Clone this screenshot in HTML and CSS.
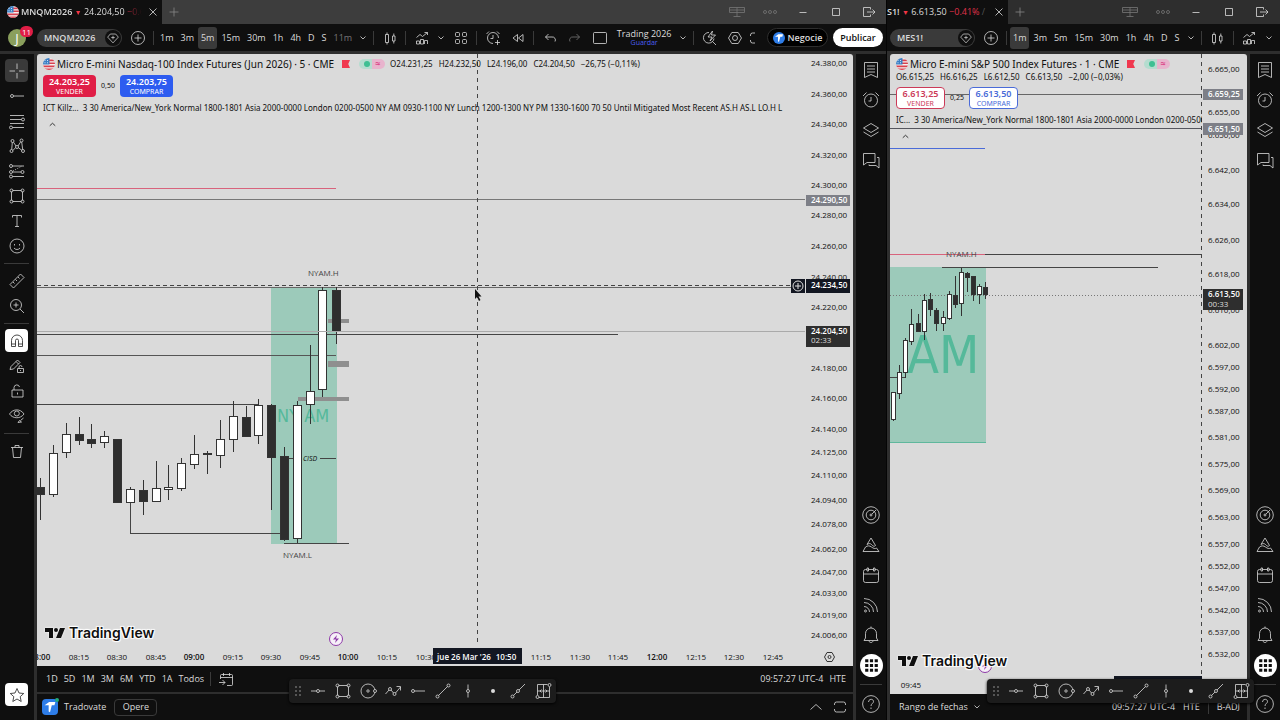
FILE: index.html
```html
<!DOCTYPE html>
<html lang="es">

<head>
    <meta charset="utf-8">
    <meta name="viewport" content="width=device-width, initial-scale=1.0">
    <title>MNQM2026 24.204,50</title>
    <link rel="stylesheet" href="styles.css">
</head>

<body>

    <!-- icons -->
    <svg class="sprite" aria-hidden="true">
        <symbol id="i-flag" viewBox="0 0 12 12">
            <clipPath id="round"><circle cx="6" cy="6" r="6"/></clipPath>
            <g clip-path="url(#round)" stroke="none">
                <path fill="#f4f0f0" d="M0 0h12v12H0z"/>
                <path fill="#d8414f" d="M6 1.5h6v1.7H6zM6 4.5h6v1.6H6zM0 7.6h12v1.6H0zM0 10.6h12V12H0z"/>
                <path fill="#3a7fc4" d="M0 0h6.5v6.5H0z"/>
                <path fill="#cfe2f5" d="M1.5 2h1v1h-1zM4 2h1v1H4zM1.5 4.3h1v1h-1zM4 4.3h1v1H4z"/>
            </g>
        </symbol>
        <symbol id="i-close" viewBox="0 0 18 18"><path d="M5.5 5.5l7 7M12.5 5.5l-7 7"/></symbol>
        <symbol id="i-plus" viewBox="0 0 18 18"><path d="M9 4.5v9M4.5 9h9"/></symbol>
        <symbol id="i-windows" viewBox="0 0 18 18"><path d="M1.5 4.5h15v5h-15zM9 4.5v9M5.5 13.5h7M1.5 7h15"/></symbol>
        <symbol id="i-more" viewBox="0 0 18 18"><circle cx="4" cy="9" r="1.5"/><circle cx="9" cy="9" r="1.5"/><circle cx="14" cy="9" r="1.5"/></symbol>
        <symbol id="i-min" viewBox="0 0 18 18"><path d="M5.5 9.5h7"/></symbol>
        <symbol id="i-max" viewBox="0 0 18 18"><path d="M5.5 5.5h7v7h-7z"/></symbol>
        <symbol id="i-exit" viewBox="0 0 18 18"><path d="M10.5 6.5v-2h-7v9h7v-2M7 9h8M12.5 6.5L15 9l-2.5 2.5"/></symbol>
        <symbol id="i-heart" viewBox="0 0 18 18"><path d="M6 4.5h6l3 3.5L9 14.5 3 8zM9 6.5v4M7 8.5h4"/></symbol>
        <symbol id="i-pluscircle" viewBox="0 0 18 18"><circle cx="9" cy="9" r="6.5"/><path d="M9 5.5v7M5.5 9h7"/></symbol>
        <symbol id="i-down" viewBox="0 0 18 18"><path d="M6.5 7.5L9 10l2.5-2.5"/></symbol>
        <symbol id="i-up" viewBox="0 0 18 18"><path d="M3.5 11.5L9 6.5l5.5 5"/></symbol>
        <symbol id="i-candles" viewBox="0 0 18 18"><path d="M4.5 5.5h3v8h-3zM6 3.5v2M6 13.5v2M11.5 7H14v5h-2.5zM12.8 4.5V7M12.8 12v2.5"/></symbol>
        <symbol id="i-indicators" viewBox="0 0 18 18"><path d="M3.5 15v-3h3v3zM7.5 15v-4.5h3V15zM11.5 15v-3.5h3V15M3.5 8.500L7 5.500l2.500 2 5-4M11.5 3.500h3V6"/></symbol>
        <symbol id="i-grid" viewBox="0 0 18 18"><rect x="3.5" y="3.5" width="4" height="4" rx="1"/><rect x="10.5" y="3.5" width="4" height="4" rx="1"/><rect x="3.5" y="10.5" width="4" height="4" rx="1"/><rect x="10.5" y="10.5" width="4" height="4" rx="1"/></symbol>
        <symbol id="i-alertplus" viewBox="0 0 18 18"><path d="M14.5 9A5.500 5.500 0 1 0 9 14.500M9 6v3.500H6.500M2.500 5L5 2.500M13 2.500L15.500 5M13.500 11v5M11 13.500h5"/></symbol>
        <symbol id="i-rewind" viewBox="0 0 18 18"><path d="M8.500 5.500v7L4 9zM14 5.500v7L9.500 9z"/></symbol>
        <symbol id="i-undo" viewBox="0 0 18 18"><path d="M7.500 5L4.500 8l3 3M4.500 8H11a3 3 0 0 1 3 4.500"/></symbol>
        <symbol id="i-redo" viewBox="0 0 18 18"><path d="M10.500 5l3 3-3 3M13.500 8H7a3 3 0 0 0-3 4.500"/></symbol>
        <symbol id="i-layout" viewBox="0 0 18 18"><rect x="2.500" y="3.500" width="13" height="11" rx="1"/></symbol>
        <symbol id="i-quick" viewBox="0 0 18 18"><path d="M8 3.500A5.300 5.300 0 1 0 13 9.500M11.500 12.500L15 16M11.500 2L7 8h4l-2 4 5.500-6h-4z"/></symbol>
        <symbol id="i-hex" viewBox="0 0 18 18"><path d="M5.800 3.500h6.400L15.500 9l-3.300 5.500H5.800L2.500 9z"/><circle cx="9" cy="9" r="2.500"/></symbol>
        <symbol id="i-full" viewBox="0 0 18 18"><path d="M3.500 7V6a2 2 0 0 1 2-2h7a2 2 0 0 1 2 2v1M14.500 11v1a2 2 0 0 1-2 2h-7a2 2 0 0 1-2-2v-1"/></symbol>
        <symbol id="i-corners" viewBox="0 0 18 18"><path d="M3.500 7V6a2 2 0 0 1 2-2H8M3.500 11v1a2 2 0 0 0 2 2H8"/></symbol>
        <symbol id="i-cross" viewBox="0 0 18 18"><path d="M9 1.500V7M9 11v5.500M1.500 9H7M11 9h5.500"/></symbol>
        <symbol id="i-hray" viewBox="0 0 18 18"><circle cx="4" cy="9" r="1.500"/><path d="M5.500 9H16"/></symbol>
        <symbol id="i-fib" viewBox="0 0 18 18"><path d="M2 3.500h14M2 7.500h11.500M2 11.500h14M4.500 15.500H16"/><circle cx="15" cy="7.500" r="1.500"/><circle cx="3" cy="15.500" r="1.500"/></symbol>
        <symbol id="i-pattern" viewBox="0 0 18 18"><circle cx="3.500" cy="14" r="1.500"/><circle cx="4.500" cy="4" r="1.500"/><circle cx="9" cy="10" r="1.500"/><circle cx="13.500" cy="3.500" r="1.500"/><circle cx="15" cy="14" r="1.500"/><path d="M3.700 12.500l.6-7M5.500 5.200L8 9M10 9l2.700-4.200M13.700 5l1 7.500M5 13.400l2.600-2.800M10.300 10.700l3.500 2.500"/></symbol>
        <symbol id="i-forecast" viewBox="0 0 18 18"><circle cx="3" cy="4" r="1.500"/><circle cx="3" cy="10" r="1.500"/><circle cx="3" cy="14.500" r="1.500"/><circle cx="14.500" cy="10" r="1.500"/><path d="M4.500 4H16M4.500 10H13M4.500 14.500H16"/><path stroke-dasharray="1 1.500" d="M5 9l9-5"/></symbol>
        <symbol id="i-rect" viewBox="0 0 18 18"><path d="M4.500 3.500h9M4.500 14.500h9M3.500 4.500v9M14.500 4.500v9"/><circle cx="3.500" cy="3.500" r="1.500"/><circle cx="14.500" cy="3.500" r="1.500"/><circle cx="3.500" cy="14.500" r="1.500"/><circle cx="14.500" cy="14.500" r="1.500"/></symbol>
        <symbol id="i-text" viewBox="0 0 18 18"><path d="M4.500 5.500v-2h9v2M9 3.500v11M7 14.500h4"/></symbol>
        <symbol id="i-smile" viewBox="0 0 18 18"><circle cx="9" cy="9" r="7"/><path d="M6.500 7v1.500M11.500 7v1.500M6 11c1.500 2 4.500 2 6 0"/></symbol>
        <symbol id="i-ruler" viewBox="0 0 18 18"><path d="M2 12.500L12.500 2 16 5.500 5.500 16zM5 10l1.500 1.500M7.500 7.500L9 9M10 5l1.500 1.500"/></symbol>
        <symbol id="i-zoomin" viewBox="0 0 18 18"><circle cx="8" cy="8" r="5.500"/><path d="M12 12l4 4M8 5.500v5M5.500 8h5"/></symbol>
        <symbol id="i-magnet" viewBox="0 0 18 18"><path d="M3.500 14.500v-6a5.500 5.500 0 0 1 11 0v6h-4v-6a1.500 1.500 0 0 0-3 0v6zM3.500 12h4M10.500 12h4"/></symbol>
        <symbol id="i-penlock" viewBox="0 0 18 18"><path d="M2 12.500l1-3L9.500 3 12 5.500 5.500 12zM8 4.500L10.500 7M9.500 11.500h6v4h-6zM11 11.500V10a1.500 1.500 0 0 1 3 0M12.500 13v1"/></symbol>
        <symbol id="i-lock" viewBox="0 0 18 18"><path d="M4 8h11v7H4zM6 8V5.500a2.800 2.800 0 0 1 5.500-.5M9.500 10.500v2"/></symbol>
        <symbol id="i-eye" viewBox="0 0 18 18"><path d="M1.500 7C5 1.500 12.500 1.500 16 7c-3.500 5-11 5-14.500 0z"/><circle cx="8.800" cy="6.500" r="2.500"/><path d="M10 15.500l1.500-2 2 1.500zM12.500 13.500l3-2.500"/></symbol>
        <symbol id="i-trash" viewBox="0 0 18 18"><path d="M3 5.500h12M4.500 5.500l1 10h7l1-10M7 5.500v-2h4v2"/></symbol>
        <symbol id="i-star" viewBox="0 0 18 18"><path d="M9 2.500L11 7l4.700.5-3.500 3.200 1 4.800L9 13l-4.200 2.500 1-4.800L2.300 7.500 7 7z"/></symbol>
        <symbol id="i-list" viewBox="0 0 18 18"><path d="M2.500 1.500h13v15L9 13.500l-6.500 3zM5 5h8M5 8h8M5 11h8"/></symbol>
        <symbol id="i-alarm" viewBox="0 0 18 18"><circle cx="9" cy="9.500" r="6.500"/><path d="M9 6v4H6.500M1 5l3.500-3.500M13.500 1.500L17 5"/></symbol>
        <symbol id="i-layers" viewBox="0 0 18 18"><path d="M9 2.500L16.500 7 9 11.500 1.500 7zM1.500 11L9 15.500l7.500-4.500"/></symbol>
        <symbol id="i-chat" viewBox="0 0 18 18"><path d="M1.500 2.500H13v9H5L1.500 14zM15 6.500h2V17l-3-2.500H7v-1"/></symbol>
        <symbol id="i-radar" viewBox="0 0 18 18"><circle cx="9" cy="9" r="8.300"/><circle cx="9" cy="9" r="4.800"/><circle cx="9" cy="9" r="1"/><path d="M10 8l4-4"/></symbol>
        <symbol id="i-pyramid" viewBox="0 0 18 18"><path d="M5 8.500L9 2l4.500 7.500c-1.500 1.500-2.500.5-4-1s-3-1-4.500 0zM3.500 11L1 15.500h16L14.500 12c-1.500 1-3 .5-5-1s-4-1.500-6 0z"/></symbol>
        <symbol id="i-calendar" viewBox="0 0 18 18"><rect x="1.500" y="3.500" width="15" height="13" rx="2"/><path d="M1.500 8h15"/><path fill="#0f0f0f" d="M5 2h1.500v3H5zM11.500 2H13v3h-1.500z"/></symbol>
        <symbol id="i-feed" viewBox="0 0 18 18"><circle cx="3.500" cy="15" r="1"/><path d="M2 10.500A5.500 5.500 0 0 1 7.500 16M2 6.500A9.500 9.500 0 0 1 11.500 16M2 2.500A13.500 13.500 0 0 1 15.500 16"/></symbol>
        <symbol id="i-bell" viewBox="0 0 18 18"><path d="M2 14.500h14L14.500 12V7.500C14.500 4.500 12 2 9 2S3.500 4.500 3.500 7.500V12zM7 15c.5 2 3.500 2 4 0M9 .5V2"/></symbol>
        <symbol id="i-apps" viewBox="0 0 18 18"><path fill="currentColor" stroke="none" d="M3 3h3v3H3zM7.500 3h3v3h-3zM12 3h3v3h-3zM3 7.500h3v3H3zM7.500 7.500h3v3h-3zM12 7.500h3v3h-3zM3 12h3v3H3zM7.500 12h3v3h-3zM12 12h3v3h-3z"/></symbol>
        <symbol id="i-help" viewBox="0 0 18 18"><circle cx="9" cy="9" r="8.400"/><path d="M6.500 7c0-3.500 5-3.500 5-.5C11.500 8.500 9 8.500 9 11M9 12.500V14"/></symbol>
        <symbol id="i-goto" viewBox="0 0 18 18"><path d="M3.500 9V5.500a1 1 0 0 1 1-1h10a1 1 0 0 1 1 1v9a1 1 0 0 1-1 1H10M3.500 7.500h12M6.500 3v3M12.500 3v3M2 12.500h6M5.500 10L8 12.500 5.500 15"/></symbol>
        <symbol id="i-hline" viewBox="0 0 18 18"><path d="M2 9h5.500M10.500 9H16"/><circle cx="9" cy="9" r="1.500"/></symbol>
        <symbol id="i-circle" viewBox="0 0 18 18"><circle cx="9" cy="9" r="7"/><circle cx="9" cy="9" r="1.200"/><circle cx="16" cy="9" r="1.500" fill="#1c1c1c"/></symbol>
        <symbol id="i-path" viewBox="0 0 18 18"><path d="M1.500 12L5 8M7 8l2.500 3M11.500 11l5-6M12.500 4.500h4v4"/><circle cx="6" cy="7" r="1.500"/><circle cx="10.500" cy="12" r="1.500"/></symbol>
        <symbol id="i-trend" viewBox="0 0 18 18"><circle cx="3.500" cy="14.500" r="1.500"/><circle cx="14.500" cy="3.500" r="1.500"/><path d="M4.500 13.500l9-9"/></symbol>
        <symbol id="i-vline" viewBox="0 0 18 18"><path d="M9 2.500v5M9 10.500v5"/><circle cx="9" cy="9" r="1.500"/></symbol>
        <symbol id="i-dot" viewBox="0 0 18 18"><circle cx="9" cy="9" r="2" fill="currentColor" stroke="none"/></symbol>
        <symbol id="i-ray" viewBox="0 0 18 18"><circle cx="3.500" cy="14.500" r="1.500"/><circle cx="9" cy="9" r="1.500"/><path d="M4.500 13.500L8 10M10 8l6-6"/></symbol>
        <symbol id="i-range" viewBox="0 0 18 18"><path d="M3.500 13V2.500h10M5 15.500h10.500V5M9.500 2.500v13M3.500 9h12M7.500 7.500L6 9l1.500 1.500M11.500 7.500L13 9l-1.500 1.500"/><circle cx="3.500" cy="15" r="1.500"/><circle cx="15.500" cy="3" r="1.500"/></symbol>
        <symbol id="i-tv" viewBox="0 0 20 10"><path stroke="none" fill="currentColor" d="M0 0h8v10H4V4H0zM15 0h5l-4 10h-5z"/><circle cx="11" cy="2" r="2" stroke="none" fill="currentColor"/></symbol>
        <symbol id="i-broker" viewBox="0 0 18 18"><path stroke="none" fill="currentColor" d="M3 7l5-3.500h7L14 7h-3l-2 8-1.500-1V7z"/></symbol>
        <symbol id="i-bookmark" viewBox="0 0 9 9"><path stroke="none" fill="#f0384f" d="M0 0h9L7 4.500 9 9H0z"/></symbol>
    </svg>

    <div id="desktop">

        <section class="window main-window">
            <header class="titlebar">
                <div class="tab">
                    <svg class="flag"><use href="#i-flag"/></svg>
                    <span class="quote"><b>MNQM2026</b> <i class="fall">▼</i> 24.204,50 <span class="down">−0.67</span></span>
                    <button aria-label="Cerrar"><svg class="icon"><use href="#i-close"/></svg></button>
                </div>
                <button class="newtab" aria-label="Nueva pestaña"><svg class="icon"><use href="#i-plus"/></svg></button>
                <div class="wincontrols"></div>
            </header>

            <nav class="toolbar">
                <button class="avatar">J<span class="badge">11</span></button>
                <button class="symbol">MNQM2026 <span class="mark"><svg class="icon"><use href="#i-heart"/></svg></span></button>
                <button class="tool" aria-label="Comparar"><svg class="icon"><use href="#i-pluscircle"/></svg></button>
                <span class="sep"></span>
                <button class="interval">1m</button>
                <button class="interval">3m</button>
                <button class="interval selected">5m</button>
                <button class="interval">15m</button>
                <button class="interval">30m</button>
                <button class="interval">1h</button>
                <button class="interval">4h</button>
                <button class="interval">D</button>
                <button class="interval">S</button>
                <button class="interval dim">11m</button>
                <button class="chevron" aria-label="Intervalos"><svg class="icon"><use href="#i-down"/></svg></button>
                <span class="sep"></span>
                <button class="tool" aria-label="Velas"><svg class="icon"><use href="#i-candles"/></svg></button>
                <span class="sep"></span>
                <button class="tool" aria-label="Indicadores"><svg class="icon"><use href="#i-indicators"/></svg></button>
                <button class="chevron" aria-label="Favoritos"><svg class="icon"><use href="#i-down"/></svg></button>
                <button class="tool" aria-label="Plantillas"><svg class="icon"><use href="#i-grid"/></svg></button>
                <span class="sep"></span>
                <button class="tool" aria-label="Alerta"><svg class="icon"><use href="#i-alertplus"/></svg></button>
                <button class="tool" aria-label="Repetición"><svg class="icon"><use href="#i-rewind"/></svg></button>
                <span class="sep"></span>
                <button class="tool" aria-label="Deshacer"><svg class="icon"><use href="#i-undo"/></svg></button>
                <button class="tool dim" aria-label="Rehacer"><svg class="icon"><use href="#i-redo"/></svg></button>
                <button class="tool" aria-label="Diseño"><svg class="icon"><use href="#i-layout"/></svg></button>
                <button class="layoutname">Trading 2026<small>Guardar</small></button>
                <button class="chevron" aria-label="Diseños"><svg class="icon"><use href="#i-down"/></svg></button>
                <span class="sep"></span>
                <button class="tool" aria-label="Búsqueda rápida"><svg class="icon"><use href="#i-quick"/></svg></button>
                <button class="tool" aria-label="Ajustes"><svg class="icon"><use href="#i-hex"/></svg></button>
                <button class="tool cut" aria-label="Pantalla completa"><svg class="icon"><use href="#i-corners"/></svg></button>
                <button class="trade"><span class="broker"><svg class="icon"><use href="#i-broker"/></svg></span>Negocie</button>
                <button class="publish">Publicar</button>
            </nav>

            <div class="body">
                <aside class="drawing">
                    <button class="active" aria-label="Cruz"><svg class="icon"><use href="#i-cross"/></svg></button>
                    <button aria-label="Línea"><svg class="icon"><use href="#i-hray"/></svg></button>
                    <button aria-label="Fibonacci"><svg class="icon"><use href="#i-fib"/></svg></button>
                    <button aria-label="Patrones"><svg class="icon"><use href="#i-pattern"/></svg></button>
                    <button aria-label="Proyección"><svg class="icon"><use href="#i-forecast"/></svg></button>
                    <button aria-label="Formas"><svg class="icon"><use href="#i-rect"/></svg></button>
                    <button aria-label="Texto"><svg class="icon"><use href="#i-text"/></svg></button>
                    <button aria-label="Iconos"><svg class="icon"><use href="#i-smile"/></svg></button>
                    <hr>
                    <button aria-label="Medir"><svg class="icon"><use href="#i-ruler"/></svg></button>
                    <button aria-label="Acercar"><svg class="icon"><use href="#i-zoomin"/></svg></button>
                    <hr>
                    <button class="on" aria-label="Imán"><svg class="icon"><use href="#i-magnet"/></svg></button>
                    <button aria-label="Modo dibujo"><svg class="icon"><use href="#i-penlock"/></svg></button>
                    <button aria-label="Bloquear"><svg class="icon"><use href="#i-lock"/></svg></button>
                    <button aria-label="Ocultar"><svg class="icon"><use href="#i-eye"/></svg></button>
                    <hr>
                    <button aria-label="Eliminar"><svg class="icon"><use href="#i-trash"/></svg></button>
                    <button class="on last" aria-label="Favoritos"><svg class="icon"><use href="#i-star"/></svg></button>
                </aside>

                <main class="center">
                    <div class="chart">
                        <div class="pane">
                            <svg class="plot" id="nq"></svg>
                            <div class="legend">
                                <div class="name">
                                    <svg class="flag"><use href="#i-flag"/></svg>
                                    <h1>Micro E-mini Nasdaq-100 Index Futures (Jun 2026) · 5 · CME</h1>
                                    <svg class="bookmark"><use href="#i-bookmark"/></svg>
                                    <span class="status"><i></i><b>≈</b></span>
                                    <span class="ohlc"><span>O24.231,25</span><span>H24.232,50</span><span>L24.196,00</span><span>C24.204,50</span><span>−26,75 (−0,11%)</span></span>
                                </div>
                                <div class="orders">
                                    <button class="sell">24.203,25<small>VENDER</small></button>
                                    <span class="spread">0,50</span>
                                    <button class="buy">24.203,75<small>COMPRAR</small></button>
                                </div>
                                <p class="indicator">ICT Killz... &nbsp;3 30 America/New_York Normal 1800-1801 Asia 2000-0000 London 0200-0500 NY AM 0930-1100 NY Lunch 1200-1300 NY PM 1330-1600 70 50 Until Mitigated Most Recent AS.H AS.L LO.H L</p>
                                <button class="collapse" aria-label="Contraer"><svg class="icon"><use href="#i-up"/></svg></button>
                            </div>
                            <div class="logo"><svg><use href="#i-tv"/></svg>TradingView</div>
                        </div>
                        <svg class="prices" id="nq-prices"></svg>
                        <svg class="times" id="nq-times"></svg>
                    </div>
                    <div class="ranges">
                        <button>1D</button>
                        <button>5D</button>
                        <button>1M</button>
                        <button>3M</button>
                        <button>6M</button>
                        <button>YTD</button>
                        <button>1A</button>
                        <button>Todos</button>
                        <span class="sep"></span>
                        <button class="tool" aria-label="Ir a"><svg class="icon"><use href="#i-goto"/></svg></button>
                        <span class="clock">09:57:27 UTC-4</span>
                        <button>HTE</button>
                    </div>
                    <div class="account">
                        <span class="brokerlogo"><svg class="icon"><use href="#i-broker"/></svg></span>
                        <span>Tradovate</span>
                        <button class="open">Opere</button>
                        <button class="tool push" aria-label="Abrir panel"><svg class="icon"><use href="#i-up"/></svg></button>
                        <button class="tool" aria-label="Maximizar panel"><svg class="icon"><use href="#i-full"/></svg></button>
                    </div>
                </main>

                <aside class="widgets"></aside>
            </div>

            <div class="favorites"></div>
        </section>

        <section class="window side-window">
            <header class="titlebar">
                <div class="tab">
                    <span class="quote"><b>S1!</b> <i class="fall">▼</i> 6.613,50 <span class="down">−0.41%</span> <span class="faint">/</span></span>
                    <button aria-label="Cerrar"><svg class="icon"><use href="#i-close"/></svg></button>
                </div>
                <button class="newtab" aria-label="Nueva pestaña"><svg class="icon"><use href="#i-plus"/></svg></button>
                <div class="wincontrols"></div>
            </header>

            <nav class="toolbar">
                <button class="symbol">MES1! <span class="mark"><svg class="icon"><use href="#i-heart"/></svg></span></button>
                <button class="tool" aria-label="Comparar"><svg class="icon"><use href="#i-pluscircle"/></svg></button>
                <span class="sep"></span>
                <button class="interval selected">1m</button>
                <button class="interval">3m</button>
                <button class="interval">5m</button>
                <button class="interval">15m</button>
                <button class="interval">30m</button>
                <button class="interval">1h</button>
                <button class="interval">4h</button>
                <button class="interval">D</button>
                <button class="interval">S</button>
                <button class="chevron" aria-label="Intervalos"><svg class="icon"><use href="#i-down"/></svg></button>
                <span class="sep"></span>
                <button class="tool" aria-label="Velas"><svg class="icon"><use href="#i-candles"/></svg></button>
                <span class="sep"></span>
                <button class="tool" aria-label="Indicadores"><svg class="icon"><use href="#i-indicators"/></svg></button>
                <button class="chevron" aria-label="Favoritos"><svg class="icon"><use href="#i-down"/></svg></button>
            </nav>

            <div class="body">
                <main class="center">
                    <div class="chart">
                        <div class="pane">
                            <svg class="plot" id="es"></svg>
                            <div class="legend">
                                <div class="name">
                                    <svg class="flag"><use href="#i-flag"/></svg>
                                    <h1>Micro E-mini S&amp;P 500 Index Futures · 1 · CME</h1>
                                    <svg class="bookmark"><use href="#i-bookmark"/></svg>
                                    <span class="status"><i></i><b>≈</b></span>
                                </div>
                                <div class="ohlc"><span>O6.615,25</span><span>H6.616,25</span><span>L6.612,50</span><span>C6.613,50</span><span>−2,00 (−0,03%)</span></div>
                                <div class="orders outline">
                                    <button class="sell">6.613,25<small>VENDER</small></button>
                                    <span class="spread">0,25</span>
                                    <button class="buy">6.613,50<small>COMPRAR</small></button>
                                </div>
                                <p class="indicator">IC... &nbsp;3 30 America/New_York Normal 1800-1801 Asia 2000-0000 London 0200-0500</p>
                                <button class="collapse" aria-label="Contraer"><svg class="icon"><use href="#i-up"/></svg></button>
                            </div>
                            <div class="logo"><svg><use href="#i-tv"/></svg>TradingView</div>
                        </div>
                        <svg class="prices" id="es-prices"></svg>
                        <svg class="times" id="es-times"></svg>
                    </div>
                    <div class="ranges">
                        <button>Rango de fechas <svg class="icon"><use href="#i-down"/></svg></button>
                        <span class="clock">09:57:27 UTC-4</span>
                        <button>HTE</button>
                        <span class="sep"></span>
                        <button>B-ADJ</button>
                    </div>
                </main>

                <aside class="widgets"></aside>
            </div>

            <div class="favorites"></div>
        </section>

    </div>

    <script src="script.js"></script>

</body>

</html>
```

FILE: styles.css
```css
* {
    box-sizing: border-box;
}

body {
    margin: 0;
    background-color: #0f0f0f;
    color: #dbdbdb;
    font-family: "Open Sans", "Noto Sans", sans-serif;
    font-size: 9px;
    line-height: 12px;
}

button {
    display: flex;
    align-items: center;
    justify-content: center;
    padding: 0;
    border: none;
    background: none;
    color: inherit;
    font: inherit;
    white-space: nowrap;
    flex-shrink: 0;
}

b {
    font-weight: 600;
}

h1, p {
    margin: 0;
    font-weight: normal;
}

.sprite {
    position: absolute;
    width: 0;
    height: 0;
}

.icon {
    display: block;
    width: 18px;
    height: 18px;
    fill: none;
    stroke: currentColor;
    stroke-width: 1;
    stroke-opacity: 0.8;
    flex-shrink: 0;
}

.flag {
    width: 12px;
    height: 12px;
    flex-shrink: 0;
}

.dim {
    color: #777;
}

#desktop {
    display: grid;
    grid-template-columns: 886fr 394fr;
    height: 100vh;
}

.window {
    position: relative;
    display: flex;
    flex-direction: column;
    min-width: 0;
    background-color: #2e2e2e;
}

.side-window {
    border-left: 1px solid #050505;
}

/* title bar */

.titlebar {
    display: flex;
    align-items: center;
    height: 24px;
    padding-right: 1px;
    background-color: #3d3d3d;
}

.side-window .titlebar {
    padding-right: 2px;
    background-color: #2e2e2e;
}

.tab {
    display: flex;
    align-items: center;
    gap: 2px;
    width: 162px;
    height: 24px;
    padding-left: 7px;
    background-color: #0f0f0f;
}

.side-window .tab {
    width: 121px;
    padding-left: 0;
}

.quote {
    flex: 1;
    overflow: hidden;
    white-space: nowrap;
    mask-image: linear-gradient(to right, #000 85%, transparent);
}

.side-window .quote {
    mask-image: none;
}

.fall {
    color: #f23645;
    font-size: 7px;
    font-style: normal;
}

.down {
    color: #e0314a;
}

.faint {
    color: #555;
}

.newtab {
    width: 23px;
    color: #888;
}

.wincontrols {
    display: flex;
    margin-left: auto;
}

.wincontrols button {
    width: 33px;
}

/* top toolbar */

.toolbar {
    display: flex;
    align-items: center;
    height: 27px;
    margin-bottom: 3px;
    background-color: #0f0f0f;
    overflow: hidden;
}

.side-window .toolbar {
    padding-left: 3px;
}

.avatar {
    position: relative;
    width: 18px;
    height: 18px;
    margin: 0 11px 0 8px;
    border-radius: 50%;
    background-color: #8a9f5c;
    color: #fff;
    font-size: 13px;
}

.badge {
    position: absolute;
    top: -3px;
    left: 12px;
    width: 13px;
    height: 11px;
    border-radius: 6px;
    background-color: #e01e46;
    font-size: 8px;
    line-height: 11px;
}

.symbol {
    justify-content: space-between;
    width: 85px;
    height: 18px;
    margin-right: 3px;
    padding: 0 1px 0 7px;
    border-radius: 9px;
    background-color: #3a3a3a;
    font-weight: 600;
}

.mark {
    width: 16px;
    height: 16px;
    border-radius: 50%;
    background-color: #0f0f0f;
}

.mark .icon {
    width: 16px;
    height: 16px;
}

.tool {
    width: 25px;
}

.cut {
    width: 12px;
    justify-content: flex-start;
    overflow: hidden;
}

.chevron {
    width: 14px;
}

.sep {
    width: 1px;
    height: 14px;
    margin: 0 3px;
    background-color: #3a3a3a;
    flex-shrink: 0;
}

.interval {
    height: 22px;
    margin-right: 1px;
    padding: 0 3px;
    border-radius: 3px;
}

.selected {
    background-color: #3a3a3a;
}

.layoutname {
    flex-direction: column;
    width: 64px;
    line-height: 10px;
}

.layoutname small {
    color: #4a5ef0;
    font-size: 7px;
    line-height: 7px;
}

.trade {
    gap: 3px;
    width: 61px;
    height: 19px;
    margin-left: auto;
    border: 1px solid #2e2e2e;
    border-radius: 10px;
    background-color: #000;
    font-weight: 600;
}

.broker {
    width: 12px;
    height: 12px;
    border-radius: 50%;
    background-color: #2e7de8;
    color: #fff;
}

.broker .icon {
    width: 12px;
    height: 12px;
}

.publish {
    width: 50px;
    height: 19px;
    margin: 0 3px 0 5px;
    border-radius: 10px;
    background-color: #fff;
    color: #0f0f0f;
    font-weight: 600;
}

/* body */

.body {
    display: flex;
    gap: 3px;
    flex: 1;
    min-height: 0;
}

.side-window .body {
    padding-left: 3px;
}

.drawing {
    display: flex;
    flex-direction: column;
    align-items: center;
    gap: 2px;
    width: 34px;
    padding: 5px 1px 14px 0;
    background-color: #0f0f0f;
    flex-shrink: 0;
}

.drawing button {
    width: 23px;
    height: 23px;
    border-radius: 4px;
}

.drawing .active {
    background-color: #3a3a3a;
}

.drawing .on {
    background-color: #fff;
    color: #222;
}

.drawing .last {
    margin-top: auto;
}

hr {
    width: 25px;
    height: 1px;
    margin: 4px 0 3px;
    border: none;
    background-color: #3a3a3a;
    flex-shrink: 0;
}

.widgets {
    display: flex;
    flex-direction: column;
    align-items: center;
    width: 30px;
    padding: 1px 0;
    background-color: #0f0f0f;
    flex-shrink: 0;
}

.widgets button {
    width: 30px;
    height: 30px;
}

.widgets .radar {
    margin-top: auto;
}

.widgets .apps .icon {
    width: 23px;
    height: 23px;
    padding: 2px;
    border-radius: 50%;
    background-color: #fff;
    color: #0f0f0f;
}

.widgets hr {
    width: 22px;
    margin: 4px 0;
}

.center {
    display: flex;
    flex-direction: column;
    flex: 1;
    min-width: 0;
}

/* chart */

.chart {
    display: grid;
    grid-template-columns: minmax(0, 1fr) 48px;
    grid-template-rows: minmax(0, 1fr) 20px;
    flex: 1;
    min-height: 0;
    border-radius: 3px 3px 0 0;
    background-color: #dadada;
    color: #0f0f0f;
    overflow: hidden;
}

.side-window .chart {
    grid-template-columns: minmax(0, 1fr) 45px;
}

.pane {
    position: relative;
    display: flex;
    flex-direction: column;
    min-width: 0;
    overflow: hidden;
}

.plot {
    position: absolute;
    inset: 0;
    width: 100%;
    height: 100%;
}

.prices, .times {
    width: 100%;
    height: 100%;
}

.times {
    grid-column: 1 / 3;
}

.prices text, .times text, .plot text {
    font-size: 8px;
    fill: #0f0f0f;
}

.prices .tag, .times .tag {
    fill: #fff;
    font-weight: 600;
}

.prices .countdown {
    fill: #ddd;
}

.times text {
    text-anchor: middle;
}

.times .hour {
    font-weight: 600;
}

.plot .session {
    fill: #55b99a;
    font-family: "DejaVu Sans Condensed", "DejaVu Sans", sans-serif;
    font-size: 18px;
}

.plot .big {
    font-size: 52px;
}

.plot .level {
    fill: #444;
}

.plot .cisd {
    font-size: 7px;
    font-style: italic;
}

.legend {
    position: relative;
    padding: 3px 0 0 6px;
    font-family: "Noto Sans", "Open Sans", sans-serif;
}

.name {
    display: flex;
    align-items: center;
    height: 13px;
    white-space: nowrap;
}

.name h1 {
    margin-left: 2px;
    font-size: 10px;
}

.bookmark {
    width: 8px;
    height: 8px;
    margin: 0 9px 0 8px;
}

.status {
    display: flex;
    align-items: center;
    justify-content: space-evenly;
    width: 26px;
    height: 10px;
    margin-right: 5px;
    border-radius: 5px;
    background: linear-gradient(to right, #b5dccf 50%, #e8b4cd 50%);
    line-height: 10px;
}

.status i {
    width: 6px;
    height: 6px;
    border-radius: 50%;
    background-color: #3fbf93;
}

.status b {
    color: #d8347f;
}

.ohlc {
    display: flex;
    gap: 6px;
    font-size: 8px;
}

.side-window .ohlc {
    height: 14px;
    line-height: 14px;
}

.orders {
    display: flex;
    align-items: center;
    gap: 5px;
    margin-top: 5px;
}

.side-window .orders {
    margin-top: 3px;
}

.orders button {
    flex-direction: column;
    width: 53px;
    height: 22px;
    border-radius: 4px;
    color: #fff;
    font-weight: 600;
    line-height: 10px;
}

.orders small {
    font-size: 7px;
    font-weight: normal;
    line-height: 9px;
}

.sell {
    background-color: #e01e46;
}

.buy {
    background-color: #2d5cf0;
}

.outline button {
    width: 49px;
    border: 1px solid;
    background-color: #fff;
}

.outline .sell {
    color: #cc3a58;
}

.outline .buy {
    color: #4a6bd8;
}

.spread {
    width: 14px;
    font-size: 7px;
    text-align: center;
}

.indicator {
    margin-top: 5px;
    overflow: hidden;
    font-size: 8px;
    white-space: nowrap;
}

.collapse {
    width: 18px;
    height: 20px;
}

.collapse .icon {
    width: 9px;
    height: 9px;
    stroke-width: 2;
}

.logo {
    position: relative;
    display: flex;
    align-items: center;
    gap: 4px;
    margin: auto 0 4px 8px;
    font-family: Inter, sans-serif;
    font-size: 14px;
    font-weight: 600;
    line-height: 18px;
    color: #0f0f0f;
    text-shadow: 0 0 1px #fff, 1px 1px 1px #fff, -1px -1px 1px #fff, 1px -1px 1px #fff, -1px 1px 1px #fff;
}

.logo svg {
    width: 20px;
    height: 10px;
    filter: drop-shadow(0 0 1px #fff);
}

/* bottom bars */

.ranges, .account {
    display: flex;
    align-items: center;
    height: 26px;
    padding: 0 7px 0 9px;
    background-color: #0f0f0f;
    flex-shrink: 0;
}

.ranges {
    gap: 6px;
}

.side-window .ranges {
    gap: 8px;
}

.ranges .sep {
    margin: 0;
}

.ranges .tool {
    width: 18px;
}

.clock {
    margin-left: auto;
}

.account {
    gap: 6px;
    margin-top: 2px;
    padding: 0 4px 0 5px;
}

.brokerlogo {
    position: relative;
    width: 16px;
    height: 16px;
    border-radius: 4px;
    background-color: #2e7de8;
    color: #fff;
}

.brokerlogo::after {
    content: "";
    position: absolute;
    top: -1px;
    right: -1px;
    width: 4px;
    height: 4px;
    border-radius: 50%;
    background-color: #22ab7d;
}

.brokerlogo .icon {
    width: 16px;
    height: 16px;
}

.open {
    width: 43px;
    height: 17px;
    margin-left: 2px;
    border: 1px solid #3a3a3a;
    border-radius: 4px;
}

.account .push {
    margin-left: auto;
}

.account .tool {
    width: 18px;
}

.favorites {
    position: absolute;
    left: 289px;
    bottom: 17px;
    display: flex;
    align-items: center;
    height: 24px;
    padding-right: 1px;
    border-radius: 4px;
    background-color: #1c1c1c;
    box-shadow: 0 1px 3px #000;
}

.side-window .favorites {
    left: auto;
    right: 26px;
}

.grip {
    width: 8px;
    height: 12px;
    margin: 0 3px 0 5px;
    background-image: radial-gradient(circle at 2px 2px, #555 1px, transparent 1px);
    background-size: 4px 4px;
}
```

FILE: script.js
```js
const NS = "http://www.w3.org/2000/svg";

// candles: [x, open/close top, open/close bottom, high, low, color]
const nqCandles = [
    [40, 487, 494, 478, 520, "d"],
    [53, 453, 494, 445, 497, "w"],
    [66, 434, 452, 423, 458, "w"],
    [79, 434, 440, 417, 445, "d"],
    [91, 439, 443, 424, 448, "d"],
    [104, 436, 442, 431, 448, "w"],
    [117, 439, 502, 439, 503, "d"],
    [130, 489, 502, 487, 502, "w"],
    [143, 490, 501, 480, 515, "d"],
    [156, 488, 501, 461, 501, "w"],
    [168, 487, 489, 465, 500, "w"],
    [181, 463, 488, 458, 491, "w"],
    [194, 454, 464, 435, 469, "w"],
    [207, 453, 454, 451, 474, "d"],
    [220, 439, 455, 420, 468, "w"],
    [233, 416, 439, 401, 452, "w"],
    [246, 417, 436, 406, 436, "d"],
    [258, 405, 435, 399, 444, "w"],
    [271, 405, 457, 404, 510, "d"],
    [284, 456, 539, 447, 541, "d"],
    [297, 405, 538, 401, 543, "w"],
    [310, 391, 404, 345, 424, "w"],
    [322, 290, 389, 287, 397, "w"],
    [336, 290, 331, 287, 344, "d"]
];

const esCandles = [
    [893, 392, 419, 392, 421, "w"],
    [899, 372, 393, 365, 399, "w"],
    [905, 340, 372, 338, 378, "w"],
    [911, 324, 341, 309, 345, "w"],
    [918, 323, 331, 314, 331, "d"],
    [924, 300, 331, 294, 340, "w"],
    [930, 299, 309, 293, 316, "d"],
    [936, 310, 323, 308, 331, "d"],
    [943, 317, 323, 311, 331, "w"],
    [949, 294, 318, 291, 320, "w"],
    [955, 295, 304, 276, 308, "d"],
    [961, 272, 303, 268, 316, "w"],
    [967, 273, 277, 272, 292, "d"],
    [973, 276, 294, 276, 301, "d"],
    [979, 286, 294, 284, 304, "w"],
    [985, 287, 294, 282, 299, "d"]
];

const nqPrices = [
    ["24.380,00", 63], ["24.360,00", 94], ["24.340,00", 124], ["24.320,00", 155],
    ["24.300,00", 185], ["24.280,00", 215], ["24.260,00", 246], ["24.240,00", 277],
    ["24.220,00", 307], ["24.180,00", 368], ["24.160,00", 398], ["24.140,00", 429],
    ["24.125,00", 452], ["24.110,00", 475], ["24.094,00", 500], ["24.078,00", 524],
    ["24.062,00", 549], ["24.047,00", 572], ["24.033,00", 593], ["24.019,00", 615],
    ["24.006,00", 635]
];

const esPrices = [
    ["6.665,00", 69], ["6.660,00", 91], ["6.655,00", 112], ["6.650,00", 135],
    ["6.642,00", 170], ["6.634,00", 204], ["6.626,00", 240], ["6.618,00", 274],
    ["6.610,00", 310], ["6.602,00", 345], ["6.597,00", 367], ["6.592,00", 389],
    ["6.587,00", 411], ["6.581,00", 437], ["6.575,00", 464], ["6.569,00", 490],
    ["6.563,00", 517], ["6.557,00", 544], ["6.552,00", 566], ["6.547,00", 588],
    ["6.542,00", 610], ["6.537,00", 632], ["6.532,00", 654]
];

const nqTimes = [
    ["08:00", 40], ["08:15", 79], ["08:30", 117], ["08:45", 156], ["09:00", 194], ["09:15", 233],
    ["09:30", 271], ["09:45", 310], ["10:00", 348], ["10:15", 387], ["10:30", 426],
    ["11:15", 541], ["11:30", 580], ["11:45", 618], ["12:00", 657], ["12:15", 696],
    ["12:30", 734], ["12:45", 773]
];

// group whose origin is the top left corner of the page
function layer(id, x, y) {
    const g = document.createElementNS(NS, "g");
    g.setAttribute("transform", `translate(${-x} ${-y})`);
    document.querySelector(id).appendChild(g);
    return g;
}

function add(parent, name, attrs, text) {
    const el = document.createElementNS(NS, name);
    for (const key in attrs) {
        el.setAttribute(key, attrs[key]);
    }
    if (text) {
        el.textContent = text;
    }
    parent.appendChild(el);
}

function hline(g, x1, x2, y, color, dash) {
    add(g, "path", { d: `M${x1} ${y + 0.5}H${x2}`, stroke: color, "stroke-dasharray": dash || "none" });
}

function vline(g, x, y1, y2, color, dash) {
    add(g, "path", { d: `M${x + 0.5} ${y1}V${y2}`, stroke: color, "stroke-dasharray": dash || "none" });
}

function box(g, x, y, width, height, fill) {
    add(g, "rect", { x, y, width, height, fill });
}

function drawCandles(g, candles, half) {
    candles.forEach(([x, top, bottom, high, low, color]) => {
        vline(g, x, high, low, "#333");
        add(g, "rect", {
            x: x - half + 0.5,
            y: top + 0.5,
            width: half * 2,
            height: bottom - top,
            fill: color == "w" ? "#fff" : "#2e2e2e",
            stroke: "#333"
        });
    });
}

function drawPrices(g, prices, x) {
    prices.forEach(([label, y]) => add(g, "text", { x, y: y + 3 }, label));
}

function drawBolt(g, x, y) {
    add(g, "circle", { cx: x, cy: y, r: 6.5, fill: "#f6f0f8", stroke: "#8e3aa8" });
    add(g, "path", { d: `M${x + 1} ${y - 4}l-4 4.500h3l-1 3.500 4-4.500h-3z`, fill: "#8e3aa8" });
}

function drawNasdaq() {
    const g = layer("#nq", 37, 54);
    box(g, 271, 287, 66, 257, "#9ccaba");
    add(g, "text", { x: 277, y: 422, class: "session" }, "NY AM");
    box(g, 298, 397, 51, 4, "#8f8f8f");
    box(g, 328, 361, 21, 6, "#8f8f8f");
    box(g, 328, 319, 21, 4, "#8f8f8f");
    hline(g, 37, 336, 188, "#d8637c");
    hline(g, 37, 2000, 199, "#777");
    hline(g, 37, 2000, 287, "#666");
    hline(g, 37, 618, 334, "#444");
    hline(g, 37, 336, 355, "#555");
    hline(g, 37, 259, 404, "#444");
    hline(g, 130, 284, 533, "#444");
    vline(g, 130, 502, 533, "#444");
    hline(g, 284, 349, 543, "#444");
    hline(g, 289, 300, 458, "#444");
    hline(g, 320, 336, 458, "#444");
    drawCandles(g, nqCandles, 4);
    hline(g, 37, 2000, 331, "#aaa");
    add(g, "text", { x: 308, y: 276, class: "level" }, "NYAM.H");
    add(g, "text", { x: 283, y: 558, class: "level" }, "NYAM.L");
    add(g, "text", { x: 303, y: 461, class: "cisd" }, "CISD");
    drawBolt(g, 336, 639);
    hline(g, 37, 2000, 285, "#444", "4 3");
    vline(g, 477, 54, 645, "#444", "4 4");
    // mouse pointer
    add(g, "path", { d: "M475 289v10l2-2 2 4 1.500-1-2-3.500h3z", fill: "#111" });

    const p = layer("#nq-prices", 805, 54);
    drawPrices(p, nqPrices, 811);
    box(p, 806, 195, 44, 11, "#7d7f87");
    add(p, "text", { x: 811, y: 203, class: "tag" }, "24.290,50");
    box(p, 806, 279, 44, 14, "#131722");
    add(p, "text", { x: 811, y: 288, class: "tag" }, "24.234,50");
    box(p, 806, 326, 44, 21, "#2e2e2e");
    add(p, "text", { x: 811, y: 334, class: "tag" }, "24.204,50");
    add(p, "text", { x: 811, y: 343, class: "countdown" }, "02:33");

    box(g, 791, 279, 14, 14, "#131722");
    add(g, "circle", { cx: 798, cy: 286, r: 5, fill: "none", stroke: "#ddd" });
    add(g, "path", { d: "M798 283v6M795 286h6", stroke: "#ddd" });

    const t = layer("#nq-times", 37, 646);
    nqTimes.forEach(([label, x]) => {
        add(t, "text", { x, y: 660, class: label.endsWith(":00") ? "hour" : "quarter" }, label);
    });
    box(t, 433, 648, 89, 16, "#131722");
    add(t, "text", { x: 464, y: 660, class: "tag" }, "jue 26 Mar '26");
    add(t, "text", { x: 506, y: 660, class: "tag" }, "10:50");
    add(t, "path", { d: "M827 652.500h5l2.500 4.500-2.500 4.500h-5l-2.500-4.500z", fill: "none", stroke: "#333" });
    add(t, "circle", { cx: 829.5, cy: 657, r: 1.5, fill: "none", stroke: "#333" });
}

function drawSp() {
    const g = layer("#es", 890, 54);
    box(g, 890, 267, 96, 176, "#9ccaba");
    hline(g, 890, 986, 442, "#5fb79c");
    add(g, "text", { x: 907, y: 373, class: "session big" }, "AM");
    hline(g, 890, 2000, 94, "#666");
    hline(g, 890, 2000, 128, "#55565e");
    hline(g, 890, 985, 148, "#4a6bd8");
    hline(g, 890, 985, 254, "#d8637c");
    hline(g, 985, 2000, 254, "#444");
    hline(g, 942, 1158, 267, "#444");
    hline(g, 890, 2000, 295, "#777", "1 2");
    hline(g, 890, 905, 377, "#444");
    drawCandles(g, esCandles, 2);
    add(g, "text", { x: 946, y: 257, class: "level" }, "NYAM.H");
    drawBolt(g, 985, 666);
    vline(g, 1201, 54, 675, "#444", "4 4");

    const p = layer("#es-prices", 1202, 54);
    drawPrices(p, esPrices, 1208);
    box(p, 1203, 89, 40, 11, "#7d7f87");
    add(p, "text", { x: 1208, y: 97, class: "tag" }, "6.659,25");
    box(p, 1203, 123, 40, 12, "#7d7f87");
    add(p, "text", { x: 1208, y: 132, class: "tag" }, "6.651,50");
    box(p, 1203, 289, 40, 21, "#2e2e2e");
    add(p, "text", { x: 1208, y: 297, class: "tag" }, "6.613,50");
    add(p, "text", { x: 1208, y: 307, class: "countdown" }, "00:33");

    const t = layer("#es-times", 890, 674);
    add(t, "text", { x: 911, y: 688 }, "09:45");
    box(t, 1114, 676, 88, 16, "#131722");
}

// the parts that both windows share
const favorites = {
    hline: "Línea horizontal", rect: "Rectángulo", circle: "Círculo", path: "Trazado", hray: "Rayo horizontal",
    trend: "Línea de tendencia", vline: "Línea vertical", dot: "Punto", ray: "Rayo", range: "Rango"
};

const widgets = {
    list: "Lista", alarm: "Alertas", layers: "Objetos", chat: "Chats", radar: "Filtros", pyramid: "Pine",
    calendar: "Calendario", feed: "Comunidad", bell: "Notificaciones", apps: "Productos"
};

const controls = { windows: "Ventanas", more: "Menú", min: "Minimizar", max: "Maximizar", exit: "Salir" };

function button(id, label, css) {
    return `<button class="${css}" aria-label="${label}"><svg class="icon"><use href="#i-${id}"/></svg></button>`;
}

document.querySelectorAll(".favorites").forEach(bar => {
    bar.innerHTML = `<span class="grip"></span>`;
    for (const id in favorites) {
        bar.innerHTML += button(id, favorites[id], "tool");
    }
});

document.querySelectorAll(".widgets").forEach(bar => {
    for (const id in widgets) {
        bar.innerHTML += button(id, widgets[id], id);
    }
    bar.innerHTML += "<hr>" + button("help", "Ayuda", "help");
});

document.querySelectorAll(".wincontrols").forEach(bar => {
    for (const id in controls) {
        bar.innerHTML += button(id, controls[id], id == "windows" || id == "more" ? "dim" : "bright");
    }
});

drawNasdaq();
drawSp();
```
